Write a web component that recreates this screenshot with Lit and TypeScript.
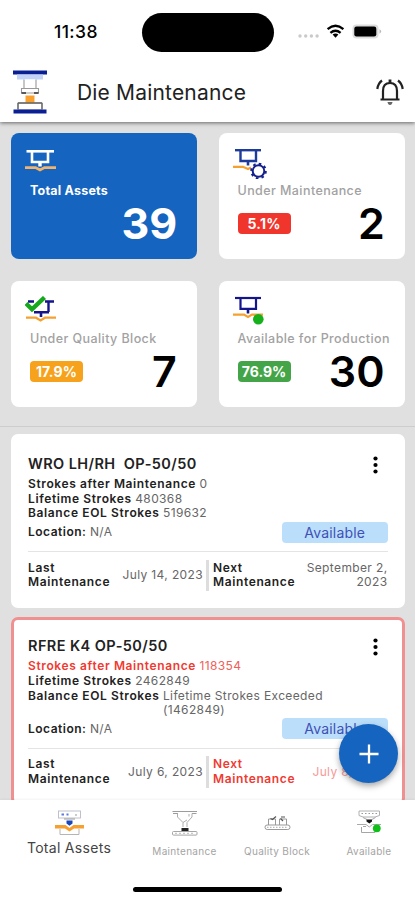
import { LitElement, html, css, svg, nothing } from "lit";
import { customElement, property } from "lit/decorators.js";
import { classMap } from "lit/directives/class-map.js";

const summaryIcons: Record<string, unknown> = {
  total: svg`
    <g fill="none" stroke="#fff" stroke-width="2.6">
      <path d="M1.5 3.3H29"/><path d="M7 3.5V14H23V3.5"/><path d="M15 14V18.5" stroke-width="3.4"/>
    </g>
    <path d="M0 19.6H10.5L15 22L19.5 19.6H31" fill="none" stroke="#f2b36b" stroke-width="2.6"/>`,
  maintenance: svg`
    <g fill="none" stroke="#1d3b9a" stroke-width="2.4">
      <path d="M2 2.2H28"/><path d="M7.5 2.5V13H23V2.5"/><path d="M15 13V17.5" stroke-width="2.6"/>
    </g>
    <path d="M0 18.8H10L15 21L18 19.5" fill="none" stroke="#f5a130" stroke-width="2.2"/>
    <circle cx="25.5" cy="23" r="5.8" fill="#fff" stroke="#14218c" stroke-width="2"/>
    <circle cx="25.5" cy="23" r="7.3" fill="none" stroke="#14218c" stroke-width="2" stroke-dasharray="2.6 3.13"/>`,
  quality: svg`
    <g fill="none" stroke="#14148c" stroke-width="2.4">
      <path d="M3 5.5H9M20 5.5H29"/><path d="M23.5 5.5V16M9 16.2H24"/><path d="M16 16V21" stroke-width="2.6"/>
    </g>
    <path d="M1 21.7H11L15.5 24.4L20 21.7H31" fill="none" stroke="#f5a130" stroke-width="2.2"/>
    <path d="M1 7.5L7 13.3L19.5 1.5" fill="none" stroke="#16a81c" stroke-width="4.4"/>`,
  available: svg`
    <g fill="none" stroke="#14148c" stroke-width="2.2">
      <path d="M2 2H28"/><path d="M7.5 2V12.8H23V2"/><path d="M15 13V17.5" stroke-width="2.6"/>
    </g>
    <path d="M0 18.6H11L15 21L19 18.6H30" fill="none" stroke="#f5a130" stroke-width="2.2"/>
    <circle cx="25.3" cy="23.3" r="5.3" fill="#16b01c"/>`,
};

const navIcons: Record<string, unknown> = {
  total: svg`
    <rect x="3.5" y="1" width="22" height="7" fill="#fff" stroke="#b9bbc5" stroke-width=".9"/>
    <path d="M6.5 4.5H9M11.5 4.5H13.5" stroke="#5d7be0" stroke-width="1.8"/><path d="M20 5H22" stroke="#999" stroke-width="1.2"/>
    <path d="M9 9H20" stroke="#9a9a9a" stroke-width="1"/>
    <path d="M5 19V24.5H24V19" fill="none" stroke="#b5b5b5" stroke-width="1"/>
    <path d="M0 15H10.5L14.5 18L18.5 15H29V18.5H19L14.5 21.5L10 18.5H0Z" fill="#f6a030"/>
    <path d="M11.5 10.5H17.5V13.5L14.5 15.7L11.5 13.5Z" fill="#1846bb"/>`,
  maintenance: svg`
    <path d="M2.5 1.5H27M3 3.5H8M22 3.5H26.5" fill="none" stroke="#9c9c9c" stroke-width="1"/>
    <path d="M7.5 3.5V7L13 12.5V17M22 3.5V7L17 12.5V17M13 12.5L17 10M19 4V6.5" fill="none" stroke="#adadad" stroke-width="1"/>
    <path d="M11.5 18H18.5V21H11.5Z" fill="#222"/>
    <rect x="2.5" y="21.5" width="24.5" height="3.6" rx="1" fill="#fff" stroke="#a5a5a5" stroke-width="1"/>
    <path d="M5 23.3H25" stroke="#bbb" stroke-width="1" stroke-dasharray="2 2"/>`,
  quality: svg`
    <rect x="2" y="15" width="25" height="4.5" rx="2.2" fill="#fff" stroke="#999" stroke-width="1"/>
    <path d="M4 17.3H25" stroke="#aaa" stroke-width="1" stroke-dasharray="1.5 1.5"/>
    <path d="M5.5 15V9H12.5V15M16.5 15V9H23.5V15" fill="none" stroke="#999" stroke-width="1"/>
    <path d="M7.5 8.5L9.5 9.5L13 6.5M18 7H22M17.5 8.5L20 11" fill="none" stroke="#555" stroke-width="1.2"/>`,
  available: svg`
    <path d="M4 1H24.5V5.5L20 7H8L4 5.5Z" fill="#fff" stroke="#b0b0b0" stroke-width="1"/>
    <path d="M6.5 3.5H22" stroke="#999" stroke-width="1" stroke-dasharray="1.5 2"/>
    <path d="M8 7.5L12 9.5M20.5 7.5L17 9.5" stroke="#a5a5a5" stroke-width="1"/>
    <path d="M11.5 9.5H17V11.5L14.3 13.5L11.5 11.5Z" fill="#151515"/>
    <path d="M2 14.5H11L14.3 17L17.5 14.5H26" fill="none" stroke="#aaa" stroke-width="1"/>
    <path d="M6.5 17V22.5H20V17M8 16.5H11" fill="none" stroke="#a5a5a5" stroke-width="1"/>
    <circle cx="21.8" cy="18.3" r="3.9" fill="#0fc018"/>`,
};

@customElement("summary-card")
class SummaryCard extends LitElement {
  @property() icon = "";
  @property() label = "";
  @property() count = "";
  @property() percent = "";
  @property() tone = "";

  static styles = css`
    :host { display: block; }
    .card { box-sizing: border-box; height: 126.5px; border-radius: 8px; background: #fff; padding: 15px 20px 0 19px; display: flex; flex-direction: column; }
    .card.active { background: #1565c0; }
    .icon { display: block; width: 34px; height: 31px; margin-left: -5px; flex: none; }
    .label { font-size: 12.5px; line-height: 16px; margin-top: 4px; font-weight: 500; color: #a2a2a2; white-space: nowrap; letter-spacing: .42px; }
    .active .label { color: #fff; font-weight: 700; letter-spacing: .22px; }
    .bottom { display: flex; align-items: center; justify-content: space-between; height: 50px; }
    .pct { width: 53px; height: 21px; line-height: 21px; border-radius: 4px; color: #fff; font-size: 14px; font-weight: 700; text-align: center; margin-bottom: 1px; }
    .red { background: #f0352c; } .orange { background: #f6a21c; } .green { background: #43a548; }
    .red, .orange { letter-spacing: .2px; }
    .count { margin-left: auto; font-size: 43px; line-height: 48px; margin-bottom: 2px; font-weight: 600; color: #000; letter-spacing: .3px; }
    .active .count { color: #fff; font-weight: 700; letter-spacing: -.1px; }
  `;

  render() {
    return html`<div class=${classMap({ card: true, active: this.tone === "blue" })}>
      <svg class="icon" viewBox="0 0 34 31">${summaryIcons[this.icon]}</svg>
      <div class="label">${this.label}</div>
      <div class="bottom">
        ${this.percent ? html`<div class=${classMap({ pct: true, [this.tone]: true })}>${this.percent}</div>` : nothing}
        <div class="count">${this.count}</div>
      </div>
    </div>`;
  }
}

interface Asset {
  name: string; after: string; lifetime: string; balance: string[];
  last: string; next: string; overdue: boolean;
}

@customElement("asset-card")
class AssetCard extends LitElement {
  @property({ attribute: false }) asset!: Asset;

  static styles = css`
    :host { display: block; }
    .card { box-sizing: border-box; border-radius: 7px; background: #fff; border: 3px solid #fff; padding: 18px 14px 14px; color: #666; font-size: 12px; line-height: 14.7px; letter-spacing: .37px; }
    .overdue { border-color: #f09090; padding-top: 17px; }
    .head { display: flex; justify-content: space-between; height: 20px; align-items: center; }
    .name { font-size: 14.5px; font-weight: 600; color: #222; white-space: pre; letter-spacing: .42px; }
    .dots { width: 5px; height: 18px; margin-right: 10px; }
    .row { display: flex; gap: 3.5px; white-space: pre; }
    .rows { padding-top: 2.5px; }
    b { font-weight: 600; color: #222; letter-spacing: .62px; }
    .overdue .hot, .overdue .hot b { color: #f03a32; }
    .overdue .hot span { color: #f0605a; }
    .overdue .late { color: #f59a98; }
    .loc { display: flex; justify-content: space-between; align-items: center; height: 21px; margin-top: .5px; }
    .loc b { letter-spacing: .5px; }
    .status { width: 105.5px; height: 21px; line-height: 21px; border-radius: 4px; background: #bbdefb; color: #3f51b5; text-align: center; font-size: 14px; letter-spacing: .2px; }
    .dates { border-top: 1.5px solid #e4e4e4; margin-top: 8.5px; padding-top: 7.5px; display: grid; grid-template-columns: 85px 93px 3px 86px 1fr; align-items: center; }
    .bar { background: #ddd; height: 31.5px; }
    .date { text-align: right; }
    .first { padding-right: 3px; white-space: nowrap; }
    .next { padding-left: 4px; }
  `;

  render() {
    const a = this.asset;
    return html`<div class=${classMap({ card: true, overdue: a.overdue })}>
      <div class="head">
        <span class="name">${a.name}</span>
        <svg class="dots" viewBox="0 0 5 18"><circle cx="2.5" cy="2.5" r="2.1"/><circle cx="2.5" cy="9" r="2.1"/><circle cx="2.5" cy="15.5" r="2.1"/></svg>
      </div>
      <div class="rows">
        <div class="row hot"><b>Strokes after Maintenance</b><span>${a.after}</span></div>
        <div class="row"><b>Lifetime Strokes</b><span>${a.lifetime}</span></div>
        <div class="row"><b>Balance EOL Strokes</b><span>${a.balance.join("\n")}</span></div>
      </div>
      <div class="loc"><div class="row"><b>Location:</b><span>N/A</span></div><div class="status">Available</div></div>
      <div class="dates">
        <b>Last Maintenance</b><span class="date first">${a.last}</span><i class="bar"></i>
        <b class="next hot">Next Maintenance</b><span class="date late">${a.next}</span>
      </div>
    </div>`;
  }
}

@customElement("app-root")
class AppRoot extends LitElement {
  static styles = css`
    :host { display: flex; flex-direction: column; width: 415px; height: 900px; overflow: hidden; position: relative; background: #fff; font-family: Inter, Roboto, sans-serif; }
    .top { height: 122px; flex: none; background: #fff; box-shadow: 0 1px 4px rgba(0,0,0,.55); position: relative; z-index: 1; }
    .status { height: 62px; display: grid; grid-template-columns: 142px 132px 1fr; align-items: center; }
    .time { font-size: 17.5px; font-weight: 500; padding-left: 54px; padding-top: 1px; letter-spacing: .4px; }
    .island { height: 39px; border-radius: 20px; background: #000; margin-top: 2px; }
    .sys { width: 86px; height: 20px; margin-left: 23px; }
    .bar { height: 60px; display: flex; align-items: center; padding: 0 10px 0 12px; }
    .logo { width: 36px; height: 46px; }
    .title { flex: 1; font-size: 21px; color: #222; padding-left: 29px; letter-spacing: .18px; }
    .bell { width: 30px; height: 30px; }
    .body { flex: 1; min-height: 0; overflow: hidden; background: #e0e0e0; }
    .summary { display: grid; grid-template-columns: 186px 186.5px; gap: 21.5px; padding: 10.5px 10.5px 18.5px 11px; border-bottom: 1.5px solid #cdcdcd; }
    .list { display: flex; flex-direction: column; gap: 8.5px; padding: 7px 10.5px 0 11px; }
    .nav { height: 100px; flex: none; background: #fff; display: grid; grid-template-columns: 138px 93px 92px 92px; align-content: start; position: relative; color: #a4a4a4; font-size: 10px; text-align: center; box-shadow: 0 -1px 2px rgba(0,0,0,.05); }
    .item { display: flex; flex-direction: column; align-items: center; padding-top: 10px; height: 77px; box-sizing: border-box; letter-spacing: .3px; }
    .item svg { width: 29px; height: 26px; }
    .item span { line-height: 18px; margin-top: 6px; white-space: nowrap; }
    .item.on { color: #444; font-size: 14px; letter-spacing: .3px; }
    .item.on span { margin-top: 3px; }
    .home { grid-column: 1 / -1; justify-self: center; width: 149px; height: 5px; border-radius: 3px; background: #000; margin-top: 10px; }
    .fab { position: absolute; left: 339px; top: 724px; width: 59px; height: 59px; border-radius: 50%; background: #1565c0; box-shadow: 0 3px 6px rgba(0,0,0,.35); display: grid; place-items: center; z-index: 2; }
    .fab svg { width: 20px; height: 20px; }
  `;

  private assets: Asset[] = [
    { name: "WRO LH/RH  OP-50/50", after: "0", lifetime: "480368", balance: ["519632"], last: "July 14, 2023", next: "September 2, 2023", overdue: false },
    { name: "RFRE K4 OP-50/50", after: "118354", lifetime: "2462849", balance: ["Lifetime Strokes Exceeded", "(1462849)"], last: "July 6, 2023", next: "July 8, 2023", overdue: true },
  ];

  render() {
    return html`
      <header class="top">
        <div class="status">
          <span class="time">11:38</span>
          <div class="island"></div>
          <svg class="sys" viewBox="0 0 86 20">
            <g fill="#cacaca"><circle cx="3" cy="15" r="1.7"/><circle cx="8.7" cy="15" r="1.7"/><circle cx="14.4" cy="15" r="1.7"/><circle cx="20.1" cy="15" r="1.7"/></g>
            <g fill="none" stroke="#000" stroke-width="2.3"><path d="M30.6 8.2Q38.5 1.4 46.4 8.2"/><path d="M33.4 11.8Q38.5 7.6 43.6 11.8"/></g>
            <path d="M35.6 13.6Q38.5 11.6 41.4 13.6L38.5 16.8Z"/>
            <rect x="55.5" y="3.5" width="26" height="14" rx="4" fill="#ddd"/>
            <rect x="57.3" y="5.5" width="22" height="10" rx="2.2"/>
            <path d="M82.5 8.2Q86 10.4 82.5 12.7Z" fill="#bbb"/>
          </svg>
        </div>
        <div class="bar">
          <svg class="logo" viewBox="0 0 36 46">
            <rect x="1" y="1.5" width="34" height="4" fill="#0b1f94"/>
            <rect x="5" y="5.5" width="26" height="5" fill="#c3d3f7"/>
            <g fill="#fff" stroke="#999" stroke-width="1.1"><path d="M12 10.5V19.5H24V10.5"/><path d="M9.5 19.5H26.5V24H9.5Z"/><path d="M6 34H30V41H6Z"/></g>
            <path d="M9.5 24H14M22 24H26.5" stroke="#333" stroke-width="1.3"/>
            <rect x="13.5" y="26.5" width="9" height="7.5" fill="#f9a12e"/>
            <path d="M6 34H30M6 34V40M30 34V40" stroke="#666" stroke-width="1.3"/>
            <rect x="1.5" y="40.5" width="33" height="4" fill="#0b1f94"/>
          </svg>
          <span class="title">Die Maintenance</span>
          <svg class="bell" viewBox="0 0 30 30">
            <path d="M5.5 22.5H24.5M8 22V14Q8 6 15 6T22 14V22" fill="none" stroke="#222" stroke-width="2.2"/>
            <path d="M15 2.5V7" stroke="#222" stroke-width="2.8"/>
            <path d="M2.3 12Q3 6.500 7 3.500M27.700 12Q27 6.500 23 3.500" fill="none" stroke="#222" stroke-width="2.2"/>
            <path d="M12.5 25H17.5Q17 28 15 28T12.5 25Z" fill="#666"/>
          </svg>
        </div>
      </header>
      <main class="body">
        <section class="summary">
          <summary-card icon="total" label="Total Assets" count="39" tone="blue"></summary-card>
          <summary-card icon="maintenance" label="Under Maintenance" count="2" percent="5.1%" tone="red"></summary-card>
          <summary-card icon="quality" label="Under Quality Block" count="7" percent="17.9%" tone="orange"></summary-card>
          <summary-card icon="available" label="Available for Production" count="30" percent="76.9%" tone="green"></summary-card>
        </section>
        <section class="list">${this.assets.map((a) => html`<asset-card .asset=${a}></asset-card>`)}</section>
      </main>
      <nav class="nav">
        <div class="item on"><svg viewBox="0 0 29 26">${navIcons.total}</svg><span>Total Assets</span></div>
        <div class="item"><svg viewBox="0 0 29 26">${navIcons.maintenance}</svg><span>Maintenance</span></div>
        <div class="item"><svg viewBox="0 0 29 26">${navIcons.quality}</svg><span>Quality Block</span></div>
        <div class="item"><svg viewBox="0 0 29 26">${navIcons.available}</svg><span>Available</span></div>
        <div class="home"></div>
      </nav>
      <div class="fab"><svg viewBox="0 0 20 20"><path d="M10 .5V19.5M.5 10H19.5" stroke="#fff" stroke-width="2.3"/></svg></div>
    `;
  }
}
